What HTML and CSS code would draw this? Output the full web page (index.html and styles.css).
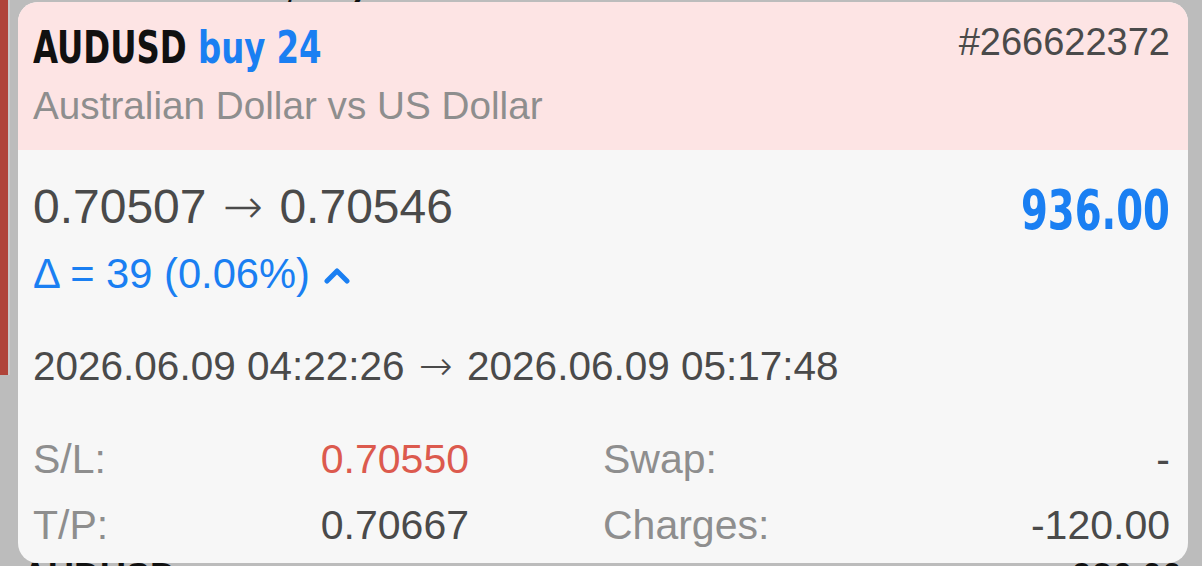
FILE: index.html
```html
<!DOCTYPE html>
<html lang="en">
<head>
    <meta charset="UTF-8">
    <meta name="viewport" content="width=device-width, initial-scale=1.0">
    <title>Position AUDUSD</title>
    <link rel="stylesheet" href="styles.css">
</head>
<body>
    <!-- dimmed trade list behind the popup -->
    <div class="backdrop">
        <div class="strip"></div>
        <div class="list">
            <div class="list-row top">
                <span>AUDUSD, buy 24</span>
                <span>0.70507 → 0.70546</span>
            </div>
            <div class="list-row bottom">
                <span>AUDUSD</span>
                <span>936.00</span>
            </div>
        </div>
    </div>

    <div class="card">
        <div class="card-head">
            <div class="title-block">
                <div class="title"><span class="symbol">AUDUSD</span> <span class="side">buy 24</span></div>
                <div class="desc">Australian Dollar vs US Dollar</div>
            </div>
            <div class="ticket">#266622372</div>
        </div>
        <div class="card-body">
            <div class="price-row">
                <div class="prices">0.70507 <span class="arrow">→</span> 0.70546</div>
                <div class="profit">936.00</div>
            </div>
            <div class="delta">
                Δ = 39 (0.06%)
                <svg class="caret" width="26" height="18" viewBox="0 0 26 18">
                    <polyline points="3,15 13,5 23,15" fill="none" stroke="currentColor" stroke-width="5" stroke-linecap="round" stroke-linejoin="round"/>
                </svg>
            </div>
            <div class="times">2026.06.09 04:22:26 <span class="arrow">→</span> 2026.06.09 05:17:48</div>
            <div class="stats">
                <div class="stat"><span class="label">S/L:</span><span class="value loss">0.70550</span></div>
                <div class="stat"><span class="label">Swap:</span><span class="value">-</span></div>
                <div class="stat"><span class="label">T/P:</span><span class="value">0.70667</span></div>
                <div class="stat"><span class="label">Charges:</span><span class="value">-120.00</span></div>
            </div>
        </div>
    </div>
</body>
</html>
```
FILE: styles.css
```css
body {
    margin: 0;
    width: 1202px;
    height: 566px;
    overflow: hidden;
    position: relative;
    background: #bcbcbc;
    font-family: 'Liberation Sans', Arial, sans-serif;
}
.backdrop {
    display: flex;
    height: 566px;
}
.strip {
    width: 8px;
    height: 375px;
    background: #b0443a;
    border-right: 2px solid #c9c9c9;
}
.list {
    flex: 1;
    display: flex;
    flex-direction: column;
    justify-content: space-between;
}
.list-row {
    display: flex;
    justify-content: space-between;
    padding: 0 20px 0 12px;
    font-size: 36px;
    font-weight: bold;
    color: #111;
    line-height: 36px;
}
.list-row.top {
    margin-top: -31px;
    padding-left: 120px;
    padding-right: 70px;
}
.list-row.bottom {
    margin-bottom: -29px;
}
.card {
    position: absolute;
    left: 18px;
    top: 2px;
    width: 1170px;
    height: 561px;
    border-radius: 20px;
    overflow: hidden;
    background: #f7f7f7;
}
.card-head {
    height: 148px;
    box-sizing: border-box;
    padding: 24px 18px 0 15px;
    background: #fde4e4;
    display: flex;
    justify-content: space-between;
    align-items: flex-start;
}
.title {
    font-family: 'Liberation Sans Narrow', 'DejaVu Sans Condensed', sans-serif;
    font-weight: bold;
    font-size: 45px;
    line-height: 44px;
    white-space: nowrap;
    transform: scaleX(0.8);
    transform-origin: left center;
}
.symbol {
    color: #111;
}
.side {
    color: #1a7ff2;
}
.desc {
    margin-top: 17px;
    font-size: 38.7px;
    line-height: 38px;
    color: #8e8e8e;
}
.ticket {
    margin-top: -3px;
    font-size: 38px;
    line-height: 38px;
    color: #4a4a4a;
}
.card-body {
    padding: 32px 18px 0 15px;
}
.price-row {
    display: flex;
    justify-content: space-between;
    align-items: flex-start;
    height: 56px;
}
.prices {
    font-size: 48px;
    line-height: 48px;
    color: #4a4a4a;
}
.arrow {
    font-family: 'DejaVu Sans', sans-serif;
    font-weight: 200;
    margin: 0 3px;
}
.profit {
    font-family: 'Liberation Sans Narrow', 'DejaVu Sans Condensed', sans-serif;
    font-weight: bold;
    font-size: 55px;
    line-height: 56px;
    color: #1a7ff2;
    transform: scaleX(0.78);
    transform-origin: right center;
}
.delta {
    margin-top: 15px;
    font-size: 41.7px;
    line-height: 41px;
    color: #1a7ff2;
    display: flex;
    align-items: center;
    gap: 14px;
}
.caret {
    margin-top: 2px;
}
.times {
    margin-top: 52px;
    font-size: 40.5px;
    line-height: 41px;
    color: #4a4a4a;
}
.stats {
    margin-top: 39px;
    display: grid;
    grid-template-columns: 436px 1fr;
    column-gap: 134px;
    font-size: 41px;
    line-height: 66px;
}
.stat {
    display: flex;
    justify-content: space-between;
}
.label {
    color: #8e8e8e;
}
.value {
    color: #4a4a4a;
}
.value.loss {
    color: #dc5a4e;
}
```
